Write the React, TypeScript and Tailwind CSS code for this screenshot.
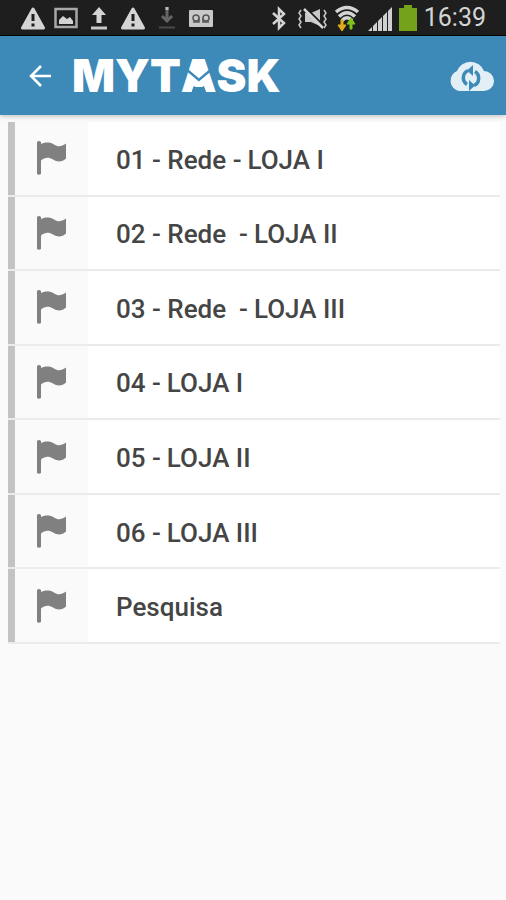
import type { ReactNode } from "react";

interface Task {
    id: number;
    prefix: string;
    store?: string;
}

const tasks: Task[] = [
    { id: 1, prefix: "01 - Rede -", store: "LOJA I" },
    { id: 2, prefix: "02 - Rede  -", store: "LOJA II" },
    { id: 3, prefix: "03 - Rede  -", store: "LOJA III" },
    { id: 4, prefix: "04 -", store: "LOJA I" },
    { id: 5, prefix: "05 -", store: "LOJA II" },
    { id: 6, prefix: "06 -", store: "LOJA III" },
    { id: 7, prefix: "Pesquisa" },
];

function StatusIcon({ width, children }: { width: number; children: ReactNode }) {
    return (
        <svg width={width} height="26" viewBox={`0 0 ${width} 26`} fill="none" aria-hidden="true">
            {children}
        </svg>
    )
}

function WarningIcon() {
    return (
        <StatusIcon width={26}>
            <path d="M13 4 L23.500 23 H2.500 Z" fill="#d4d4d4" stroke="#d4d4d4" strokeWidth="3" strokeLinejoin="round" />
            <path d="M13 9 V16 M13 18.500 V21.500" stroke="#1e1e1e" strokeWidth="3" />
        </StatusIcon>
    )
}

function StatusBar() {
    return (
        <div className="flex h-9 items-center justify-between border-b border-black bg-[#1e1e1e] px-5">
            <div className="flex items-center gap-2">
                <WarningIcon />
                <StatusIcon width={24}>
                    <rect x="1.500" y="4" width="21" height="18" stroke="#a8a8a8" strokeWidth="2.500" />
                    <path d="M5 19 V15 L9 11 L13 14 L16 12 L19 16 V19 Z" fill="#d4d4d4" />
                </StatusIcon>
                <StatusIcon width={26}>
                    <path d="M13 2 L20 10 H15.500 V18 H10.500 V10 H6 Z" fill="#d4d4d4" />
                    <path d="M5 23 H21" stroke="#c8c8c8" strokeWidth="3" />
                </StatusIcon>
                <WarningIcon />
                <StatusIcon width={26}>
                    <path d="M13 2 V16 M8 11 L13 16 L18 11" stroke="#666" strokeWidth="3" />
                    <path d="M13 2 V5" stroke="#bbb" strokeWidth="3" />
                    <path d="M5 22.500 H21" stroke="#4a4a4a" strokeWidth="2" />
                </StatusIcon>
                <StatusIcon width={26}>
                    <rect x="1" y="5" width="24" height="17" rx="1" fill="#c8c8c8" />
                    <circle cx="8" cy="13" r="3" stroke="#555" strokeWidth="1.500" />
                    <circle cx="18" cy="13" r="3" stroke="#555" strokeWidth="1.500" />
                    <path d="M5 17 H11 V13 M15 13 V17 H21" stroke="#555" strokeWidth="1.500" />
                </StatusIcon>
            </div>
            <div className="flex items-center gap-[7px]">
                <StatusIcon width={18}>
                    <path d="M1 8 L12 18 L7 23 V4 L12 9 L1 19" stroke="#d4d4d4" strokeWidth="2.500" />
                </StatusIcon>
                <StatusIcon width={30}>
                    <path d="M8 8 H14 L23 4 V21 L14 17 H8 Z" fill="#c8c8c8" />
                    <path d="M9 3 L28 22" stroke="#1e1e1e" strokeWidth="2" />
                    <path d="M7 4 L26 23" stroke="#d4d4d4" strokeWidth="2.500" />
                    <path d="M4 5 L2 8 L4 11 L2 14 L4 17 L2 20 L4 23 M27 5 L29 8 L27 11 L29 14 L27 17 L29 20 L27 23" stroke="#c8c8c8" strokeWidth="1.500" />
                </StatusIcon>
                <StatusIcon width={26}>
                    <path d="M2 7 Q13 -2 24 7 M5 11.500 Q13 4 21 11.500 M8 15.500 Q13 10 18 15.500" stroke="#d4d4d4" strokeWidth="3.500" />
                    <path d="M9 15 V20 H12 L8 26 L4 20 H7 V15 Z" fill="#e2ad1c" stroke="#e2ad1c" />
                    <path d="M16 24 V19 H13 L17 13 L21 19 H18 V24 Z" fill="#7fc31c" stroke="#7fc31c" />
                </StatusIcon>
                <StatusIcon width={25}>
                    <path d="M1 26 L5 22 V26 Z M6 21 L10 17 V26 H6 Z M11 16 L15 12 V26 H11 Z M16 11 L20 7 V26 H16 Z M21 6 L25 2 V26 H21 Z" fill="#d0d0d0" />
                </StatusIcon>
                <StatusIcon width={18}>
                    <path d="M0 3 H5 V0 H13 V3 H18 V26 H0 Z" fill="#74a21a" />
                </StatusIcon>
                <span className="font-[Roboto] text-[25px] leading-8 text-[#d4d4d4]">16:39</span>
            </div>
        </div>
    )
}

function Logo() {
    return (
        <h1 className="ml-5 font-[Inter] text-[45px] leading-[78px] font-black text-white">
            MYT
            <span className="relative inline-block">
                A
                {/* Location pin resting in the notch of the A */}
                <svg className="absolute inset-x-0 top-[22px] w-full" height="34" viewBox="0 0 36 34" aria-hidden="true">
                    <path d="M12 11 H24 L28 28 H8 Z" fill="#fff" />
                    <path d="M13 0 H23 L27 11 L18 19 L9 11 Z" fill="#fff" />
                    <path d="M5 10 L18 21 L31 10" fill="none" stroke="#3d8ab9" strokeWidth="2.500" />
                    <path d="M10 35 L13 27 L18 30 L23 27 L26 35 Z" fill="#3d8ab9" />
                </svg>
            </span>
            SK
        </h1>
    )
}

function Header() {
    return (
        <header className="relative flex h-[79px] items-center bg-[#3d8ab9] pr-3 pl-7 shadow-[0_1px_5px_rgba(0,0,0,0.25)]">
            <button type="button" aria-label="Voltar">
                <svg width="24" height="24" viewBox="0 0 24 24" fill="none" stroke="#fff" strokeWidth="2.500" aria-hidden="true">
                    <path d="M23 12 H3 M13 2 L3 12 L13 22" />
                </svg>
            </button>
            <Logo />
            <button type="button" aria-label="Sincronizar" className="ml-auto">
                <svg width="46" height="32" viewBox="0 0 46 32" aria-hidden="true">
                    <path d="M11 31 A10.500 10.500 0 0 1 9 11 A14.500 14.500 0 0 1 36 11 A10 10 0 0 1 36 31 Z" fill="#e2eff6" />
                    <path d="M19 24.500 A8 8 0 0 1 20 10.500 M27 11.500 A8 8 0 0 1 26 25.500" fill="none" stroke="#3d8ab9" strokeWidth="3.500" />
                    <path d="M25 5 V16 L19 10.500 Z M21 20 V31 L27 25.500 Z" fill="#3d8ab9" />
                </svg>
            </button>
        </header>
    )
}

function FlagIcon() {
    return (
        <svg width="30" height="34" viewBox="0 0 30 34" fill="#808080" aria-hidden="true">
            <path d="M0 1 Q2 -1 4 1 V3 C9 1 13 1 17 3.500 C21 6 24 6 29 2.500 V17.500 C25 21.500 20 21 16 18.500 C12 16 8 16 4 19.500 V33 Q2 34.500 0 33 Z" />
        </svg>
    )
}

function TaskRow({ task }: { task: Task }) {
    return (
        <li className="flex border-b-2 border-[#ebebeb] bg-white">
            <div className="w-[7px] bg-[#c3c3c3]" />
            <div className="flex w-[73px] items-center justify-center bg-[#fafafa]">
                <FlagIcon />
            </div>
            <a href={`#tarefa-${task.id}`} className="flex flex-1 items-center gap-[6px] pt-1 pl-7 font-[Roboto] text-[26px] font-medium whitespace-pre text-[#454545]">
                <span>{task.prefix}</span>
                {task.store && <span>{task.store}</span>}
            </a>
        </li>
    )
}

function App() {
    return (
        <div className="min-h-screen bg-[#fafafa]">
            <StatusBar />
            <Header />
            <ul className="mt-[7px] mr-[6px] ml-2 grid min-h-[522px] auto-rows-fr">
                {tasks.map((task) => (
                    <TaskRow key={task.id} task={task} />
                ))}
            </ul>
        </div>
    )
}

export default App
